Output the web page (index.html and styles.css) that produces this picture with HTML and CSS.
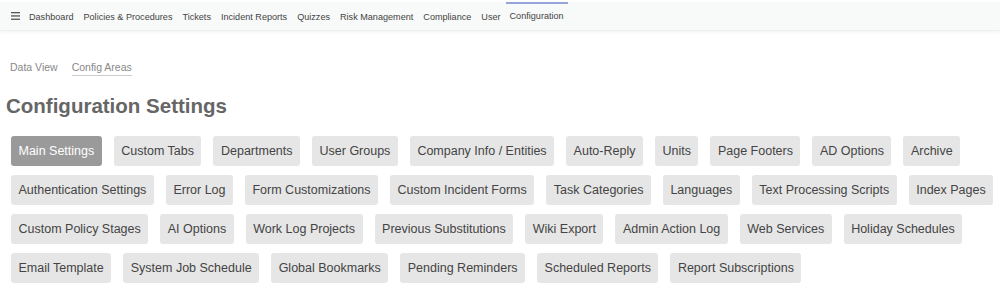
FILE: index.html
```html
<!DOCTYPE html>
<html lang="en">
<head>
    <meta charset="UTF-8">
    <title>Configuration Settings</title>
    <link rel="stylesheet" href="styles.css">
</head>
<body>

<nav class="topbar">
    <span class="menu-icon">
        <svg width="9" height="8" viewBox="0 0 9 8"><rect y="0" width="9" height="1.3" fill="#555"/><rect y="3.3" width="9" height="1.3" fill="#555"/><rect y="6.6" width="9" height="1.3" fill="#555"/></svg>
    </span>
    <a class="nav-link">Dashboard</a>
    <a class="nav-link">Policies &amp; Procedures</a>
    <a class="nav-link">Tickets</a>
    <a class="nav-link">Incident Reports</a>
    <a class="nav-link">Quizzes</a>
    <a class="nav-link">Risk Management</a>
    <a class="nav-link">Compliance</a>
    <a class="nav-link">User</a>
    <a class="nav-link active">Configuration</a>
</nav>

<main class="content">
    <div class="tabs">
        <a class="tab">Data View</a>
        <a class="tab current">Config Areas</a>
    </div>

    <h1 class="title">Configuration Settings</h1>

    <div class="settings">
        <button class="setting selected">Main Settings</button>
        <button class="setting">Custom Tabs</button>
        <button class="setting">Departments</button>
        <button class="setting">User Groups</button>
        <button class="setting">Company Info / Entities</button>
        <button class="setting">Auto-Reply</button>
        <button class="setting">Units</button>
        <button class="setting">Page Footers</button>
        <button class="setting">AD Options</button>
        <button class="setting">Archive</button>
        <button class="setting">Authentication Settings</button>
        <button class="setting">Error Log</button>
        <button class="setting">Form Customizations</button>
        <button class="setting">Custom Incident Forms</button>
        <button class="setting">Task Categories</button>
        <button class="setting">Languages</button>
        <button class="setting">Text Processing Scripts</button>
        <button class="setting">Index Pages</button>
        <button class="setting">Custom Policy Stages</button>
        <button class="setting">AI Options</button>
        <button class="setting">Work Log Projects</button>
        <button class="setting">Previous Substitutions</button>
        <button class="setting">Wiki Export</button>
        <button class="setting">Admin Action Log</button>
        <button class="setting">Web Services</button>
        <button class="setting">Holiday Schedules</button>
        <button class="setting">Email Template</button>
        <button class="setting">System Job Schedule</button>
        <button class="setting">Global Bookmarks</button>
        <button class="setting">Pending Reminders</button>
        <button class="setting">Scheduled Reports</button>
        <button class="setting">Report Subscriptions</button>
    </div>
</main>

</body>
</html>
```

FILE: styles.css
```css
body {
    margin: 0;
    font-family: "Liberation Sans", Arial, sans-serif;
    color: #333;
    background: #fff;
}

.topbar {
    display: flex;
    align-items: center;
    height: 28px;
    margin-top: 2px;
    padding-left: 11px;
    background: #f8f9f9;
    box-shadow: 0 1px 3px rgba(0, 0, 0, 0.06);
    border-bottom: 1px solid #f0eeee;
}

.menu-icon {
    display: flex;
    margin-right: 4px;
}

.nav-link {
    display: flex;
    align-items: center;
    height: 28px;
    padding: 0 5px 1px 5px;
    font-size: 9.1px;
    color: #444;
    box-sizing: border-box;
    border-top: 2px solid transparent;
}

.nav-link.active {
    border-top-color: #97a4dc;
    margin-top: -1px;
    padding: 0 4px 1px 4px;
    margin-left: 0;
}

.content {
    padding: 30px 0 0 6px;
}

.tabs {
    display: flex;
    gap: 14px;
    padding-left: 4px;
}

.tab {
    font-size: 10.5px;
    color: #888;
    padding-bottom: 2px;
    border-bottom: 1px solid transparent;
}

.tab.current {
    border-bottom-color: #ccc;
}

.title {
    margin: 18px 0 0 0;
    font-size: 20.5px;
    font-weight: bold;
    color: #666;
}

.settings {
    display: flex;
    flex-wrap: wrap;
    gap: 9px 12px;
    margin-top: 18px;
    padding-left: 5px;
}

.setting {
    font-family: "Liberation Sans", Arial, sans-serif;
    font-size: 12.5px;
    line-height: 14px;
    padding: 8px 7.5px;
    color: #444;
    background: #e6e6e6;
    border: none;
    border-radius: 3px;
}

.setting.selected {
    background: #9a9a9a;
    color: #fff;
}
```
